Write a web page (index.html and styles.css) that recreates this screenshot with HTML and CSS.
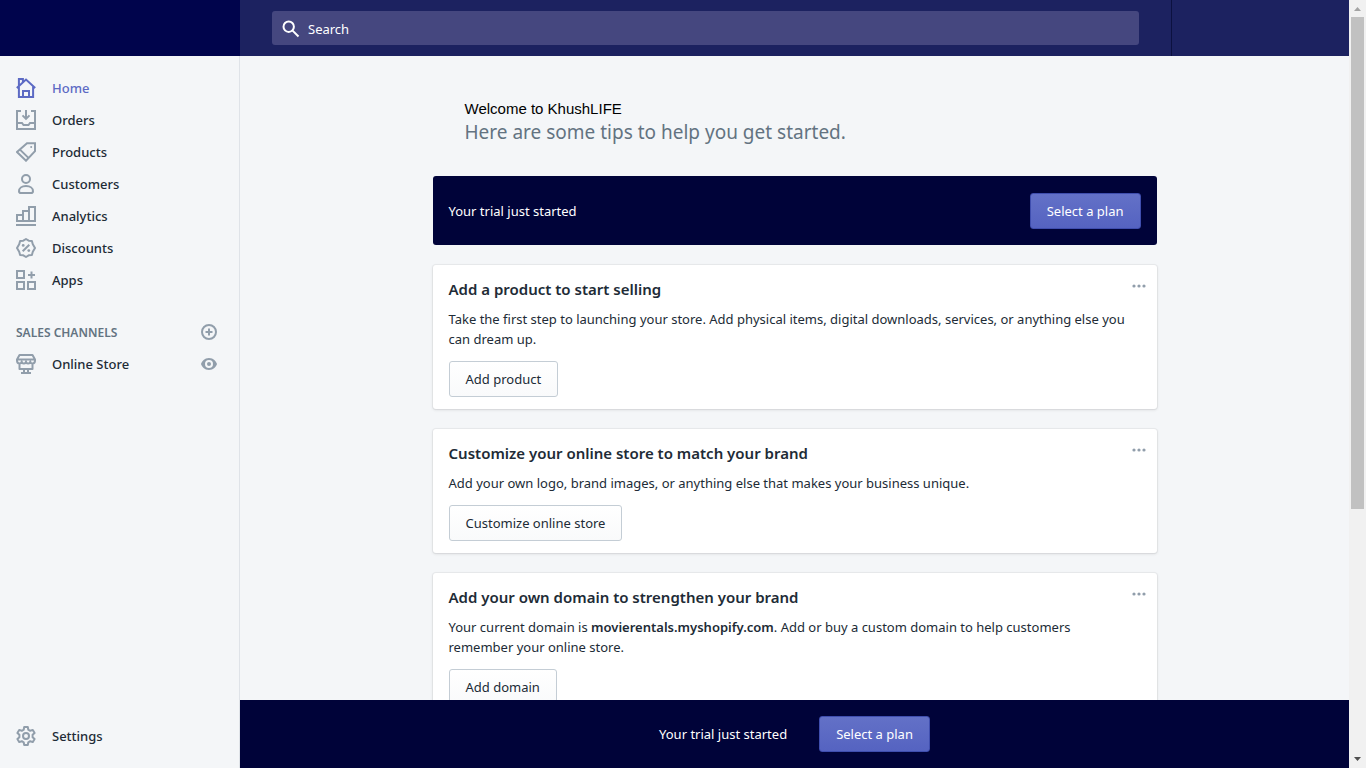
FILE: index.html
```html
<!DOCTYPE html>
<html lang="en">
<head>
<meta charset="utf-8">
<meta name="viewport" content="width=device-width, initial-scale=1">
<title>Home</title>
<link rel="stylesheet" href="styles.css">
</head>
<body>
<div class="shell">
  <header class="topbar">
    <div class="topbar-logo"></div>
    <form class="topbar-search" role="search">
      <label class="search-field">
        <svg class="search-icon" viewBox="0 0 18 18" aria-hidden="true"><circle cx="6.7" cy="6.7" r="5.2"/><path d="M10.6 10.6l5.9 5.9"/></svg>
        <input class="search-input" type="search" placeholder="Search" aria-label="Search">
      </label>
    </form>
    <div class="topbar-user"></div>
  </header>

  <aside class="sidebar">
    <nav class="nav">
      <a class="nav-link nav-link-active" href="#"><svg class="icon" viewBox="0 0 20 20"><path d="M2.900 8.500V19h14.200V8.500M.8 9.900L10 1.600l9.200 8.300M2.900 7.800V1h4v3.300M7 19v-6h6v6"/></svg>Home</a>
      <a class="nav-link" href="#"><svg class="icon" viewBox="0 0 20 20"><path d="M5 1H1v18h18V1h-4M1 13h5l1.500 2h5l1.500-2h5M10 0v8.600M6.500 5.400L10 8.900l3.500-3.500"/></svg>Orders</a>
      <a class="nav-link" href="#"><svg class="icon" viewBox="0 0 20 20"><path d="M11 1.200h8v8L10 18.700 1 10zM3.700 7.400l9 8.700"/><circle class="solid" cx="15.200" cy="4.900" r="1"/></svg>Products</a>
      <a class="nav-link" href="#"><svg class="icon" viewBox="0 0 20 20"><circle cx="10" cy="5" r="4"/><path d="M10 12c-4.200 0-7 2.200-7 5.200C3 18.500 3.700 19 5 19h10c1.300 0 2-.5 2-1.800C17 14.200 14.200 12 10 12z"/></svg>Customers</a>
      <a class="nav-link" href="#"><svg class="icon" viewBox="0 0 20 20"><path d="M0 19h20M1 15V9h6v6zM7 15V5h6v10M13 15V1h6v14H7"/></svg>Analytics</a>
      <a class="nav-link" href="#"><svg class="icon" viewBox="0 0 20 20"><path stroke-linejoin="round" d="M10 1l2.700 1.700 3.200.3.900 3.200L19 10l-2.200 3.800-.9 3.200-3.200.3L10 19l-2.700-1.700-3.200-.3-.9-3.200L1 10l2.200-3.800L4.100 3l3.200-.3zM6.700 13.300l6.600-6.600"/><circle class="solid" cx="7.200" cy="7.400" r="1.400"/><circle class="solid" cx="12.800" cy="12.600" r="1.400"/></svg>Discounts</a>
      <a class="nav-link" href="#"><svg class="icon" viewBox="0 0 20 20"><path d="M1 1h7v7H1zM1 12h7v7H1zM12 12h7v7h-7zM15.500 1.500v7M12 5h7"/></svg>Apps</a>
    </nav>
    <section class="channels">
      <div class="channels-head">
        <h2 class="channels-title">SALES CHANNELS</h2>
        <button class="icon-button" type="button" aria-label="Add sales channel"><svg class="icon-small" viewBox="0 0 16 16"><circle cx="8" cy="8" r="7"/><path d="M8 4.500v7M4.500 8h7"/></svg></button>
      </div>
      <div class="channel-row">
        <a class="nav-link" href="#"><svg class="icon" viewBox="0 0 20 20"><path stroke-linejoin="round" d="M3.500 1h13L19 5.500v1c0 1.800-1 3-2.500 3-1.300 0-2.200-.8-2.200-2 0 1.200-.9 2-2.200 2S10 8.700 10 7.500c0 1.200-.8 2-2.100 2s-2.200-.8-2.200-2c0 1.200-.9 2-2.200 2C2 9.500 1 8.300 1 6.500v-1zM1.500 5.500h17M3.500 10v5h13v-5M8 15v4M12 15v4M5 19h10"/></svg>Online Store</a>
        <button class="icon-button" type="button" aria-label="View online store"><svg class="icon-small" viewBox="0 0 16 16"><path class="eye" d="M8 2C3.500 2 .8 5.500 0 8c.8 2.500 3.500 6 8 6s7.200-3.500 8-6c-.8-2.500-3.500-6-8-6zm0 10a4 4 0 110-8 4 4 0 010 8zm0-6a2 2 0 100 4 2 2 0 000-4z"/></svg></button>
      </div>
    </section>
    <a class="nav-link nav-settings" href="#"><svg class="icon" viewBox="0 0 20 20"><path stroke-linejoin="round" d="M8.200 1h3.600l.5 2.700 1.900 1.100 2.600-.9 1.800 3.100-2 1.800v2.400l2 1.800-1.800 3.100-2.600-.9-1.900 1.100-.5 2.700H8.200l-.5-2.700-1.900-1.100-2.600.9L1.400 13l2-1.800V8.800L1.400 7l1.800-3.100 2.600.9 1.900-1.100z"/><circle cx="10" cy="10" r="3"/></svg>Settings</a>
  </aside>

  <main class="main">
    <div class="page">
      <header class="intro">
        <h1 class="intro-title">Welcome to KhushLIFE</h1>
        <p class="intro-text">Here are some tips to help you get started.</p>
      </header>
      <section class="banner">
        <p class="trial-text">Your trial just started</p>
        <button class="button button-primary" type="button">Select a plan</button>
      </section>
      <article class="card">
        <div class="card-head">
          <h2 class="card-title">Add a product to start selling</h2>
          <button class="more" type="button" aria-label="More actions"><svg class="dots" viewBox="0 0 14 4"><circle cx="2" cy="2" r="1.600"/><circle cx="7" cy="2" r="1.600"/><circle cx="12" cy="2" r="1.600"/></svg></button>
        </div>
        <p class="card-text">Take the first step to launching your store. Add physical items, digital downloads, services, or anything else you can dream up.</p>
        <button class="button" type="button">Add product</button>
      </article>
      <article class="card">
        <div class="card-head">
          <h2 class="card-title">Customize your online store to match your brand</h2>
          <button class="more" type="button" aria-label="More actions"><svg class="dots" viewBox="0 0 14 4"><circle cx="2" cy="2" r="1.600"/><circle cx="7" cy="2" r="1.600"/><circle cx="12" cy="2" r="1.600"/></svg></button>
        </div>
        <p class="card-text">Add your own logo, brand images, or anything else that makes your business unique.</p>
        <button class="button" type="button">Customize online store</button>
      </article>
      <article class="card">
        <div class="card-head">
          <h2 class="card-title">Add your own domain to strengthen your brand</h2>
          <button class="more" type="button" aria-label="More actions"><svg class="dots" viewBox="0 0 14 4"><circle cx="2" cy="2" r="1.600"/><circle cx="7" cy="2" r="1.600"/><circle cx="12" cy="2" r="1.600"/></svg></button>
        </div>
        <p class="card-text">Your current domain is <strong>movierentals.myshopify.com</strong>. Add or buy a custom domain to help customers remember your online store.</p>
        <button class="button" type="button">Add domain</button>
      </article>
    </div>
  </main>

  <footer class="trialbar">
    <p class="trial-text">Your trial just started</p>
    <button class="button button-primary" type="button">Select a plan</button>
  </footer>

  <div class="scrollbar" aria-hidden="true">
    <svg class="arrow arrow-off" viewBox="0 0 17 17"><path d="M5 11h7L8.500 7z"/></svg>
    <div class="track"><div class="thumb"></div></div>
    <svg class="arrow" viewBox="0 0 17 17"><path d="M5 6h7l-3.500 4z"/></svg>
  </div>
</div>
</body>
</html>
```
FILE: styles.css
```css
* {
  box-sizing: border-box;
}

body,
h1,
h2,
p {
  margin: 0;
}

body {
  background: #f4f6f8;
  color: #212b36;
  font: 400 13px/20px "Noto Sans", "Open Sans", sans-serif;
}

button,
input {
  font: inherit;
}

.shell {
  display: grid;
  grid-template: 56px minmax(0, 1fr) auto / 240px minmax(0, 1fr) 17px;
  height: 100vh;
  overflow: hidden;
}

/* Top bar */
.topbar {
  grid-area: 1 / 1 / 2 / 3;
  display: flex;
  background: #1c2260;
}

.topbar-logo {
  width: 240px;
  background: #00044c;
}

.topbar-search {
  flex: 1;
  display: flex;
  align-items: center;
  padding: 0 32px;
}

.search-field {
  flex: 1;
  display: flex;
  align-items: center;
  gap: 8px;
  height: 34px;
  padding: 1px 10px 0;
  border-radius: 3px;
  background: #45477f;
}

.search-icon {
  width: 18px;
  height: 18px;
  fill: none;
  stroke: #fff;
  stroke-width: 2;
}

.search-input {
  flex: 1;
  padding: 0;
  border: 0;
  outline: 0;
  background: none;
  color: #fff;
}

.search-input::placeholder {
  color: #fff;
  opacity: 1;
}

.topbar-user {
  width: 178px;
  border-left: 1px solid #0c1140;
}

/* Sidebar */
.sidebar {
  grid-area: 2 / 1 / 4 / 2;
  display: flex;
  flex-direction: column;
  padding: 16px 0;
  border-right: 1px solid #dfe3e8;
}

.nav-link {
  display: flex;
  align-items: center;
  gap: 16px;
  height: 32px;
  padding: 0 16px;
  color: #212b36;
  font-weight: 500;
  text-decoration: none;
}

.nav-link-active {
  color: #5c6ac4;
}

.icon,
.icon-small {
  flex: none;
  width: 20px;
  height: 20px;
  fill: none;
  stroke: #919eab;
  stroke-width: 2;
}

.icon-small {
  display: block;
  width: 16px;
  height: 16px;
}

.nav-link-active .icon {
  stroke: #5c6ac4;
}

.solid,
.eye {
  fill: #919eab;
  stroke: none;
}

.channels {
  margin-top: 20px;
}

.channels-head,
.channel-row {
  display: flex;
  align-items: center;
  justify-content: space-between;
  height: 32px;
  padding-right: 22px;
}

.channels-title {
  padding: 1px 0 0 16px;
  color: #637381;
  font-size: 12px;
  font-weight: 600;
}

.icon-button,
.more {
  padding: 0;
  border: 0;
  background: none;
}

.nav-settings {
  margin-top: auto;
}

/* Page content */
.main {
  grid-area: 2 / 2 / 3 / 3;
  overflow: hidden;
}

.page {
  display: flex;
  flex-direction: column;
  gap: 20px;
  max-width: 724px;
  margin: 0 auto;
  padding-top: 42px;
}

.intro {
  padding: 0 32px 12px;
}

.intro-title {
  color: #000;
  font: 400 15px/22px "Liberation Sans", Arial, sans-serif;
}

.intro-text {
  color: #637381;
  font-size: 19px;
  line-height: 24px;
}

.banner {
  display: flex;
  align-items: center;
  justify-content: space-between;
  padding: 17px 16px 16px;
  border-radius: 3px;
  background: #000339;
}

.trial-text {
  color: #fff;
}

.card {
  padding: 12px 16px;
  border-radius: 3px;
  background: #fff;
  box-shadow: 0 0 0 1px rgba(63, 63, 68, 0.05), 0 1px 3px rgba(63, 63, 68, 0.15);
}

.card-head {
  display: flex;
  justify-content: space-between;
}

.card-title {
  font-size: 15px;
  font-weight: 600;
  line-height: 24px;
}

.more {
  height: 18px;
  margin-right: -5px;
}

.dots {
  display: block;
  width: 14px;
  height: 4px;
  fill: #919eab;
}

.card-text {
  margin: 8px 0 12px;
  padding-right: 8px;
}

.card-text strong {
  font-weight: 600;
}

.button {
  height: 36px;
  padding: 0 16px;
  border: 1px solid #c4cdd5;
  border-radius: 3px;
  background: linear-gradient(#fff, #f9fafb);
  color: #212b36;
}

.button-primary {
  border-color: #3f4eae;
  background: linear-gradient(#6371c7, #5563c1);
  color: #fff;
}

/* Trial bar */
.trialbar {
  grid-area: 3 / 2 / 4 / 3;
  display: flex;
  align-items: center;
  justify-content: center;
  gap: 32px;
  padding: 16px;
  background: #000339;
}

/* Scroll bar */
.scrollbar {
  grid-area: 1 / 3 / 4 / 4;
  display: flex;
  flex-direction: column;
  background: #f1f1f1;
}

.arrow {
  width: 17px;
  height: 17px;
  fill: #505050;
}

.arrow-off {
  fill: #a3a3a3;
}

.track {
  flex: 1;
  padding: 0 2px;
}

.thumb {
  height: 67%;
  background: #c1c1c1;
}
```
